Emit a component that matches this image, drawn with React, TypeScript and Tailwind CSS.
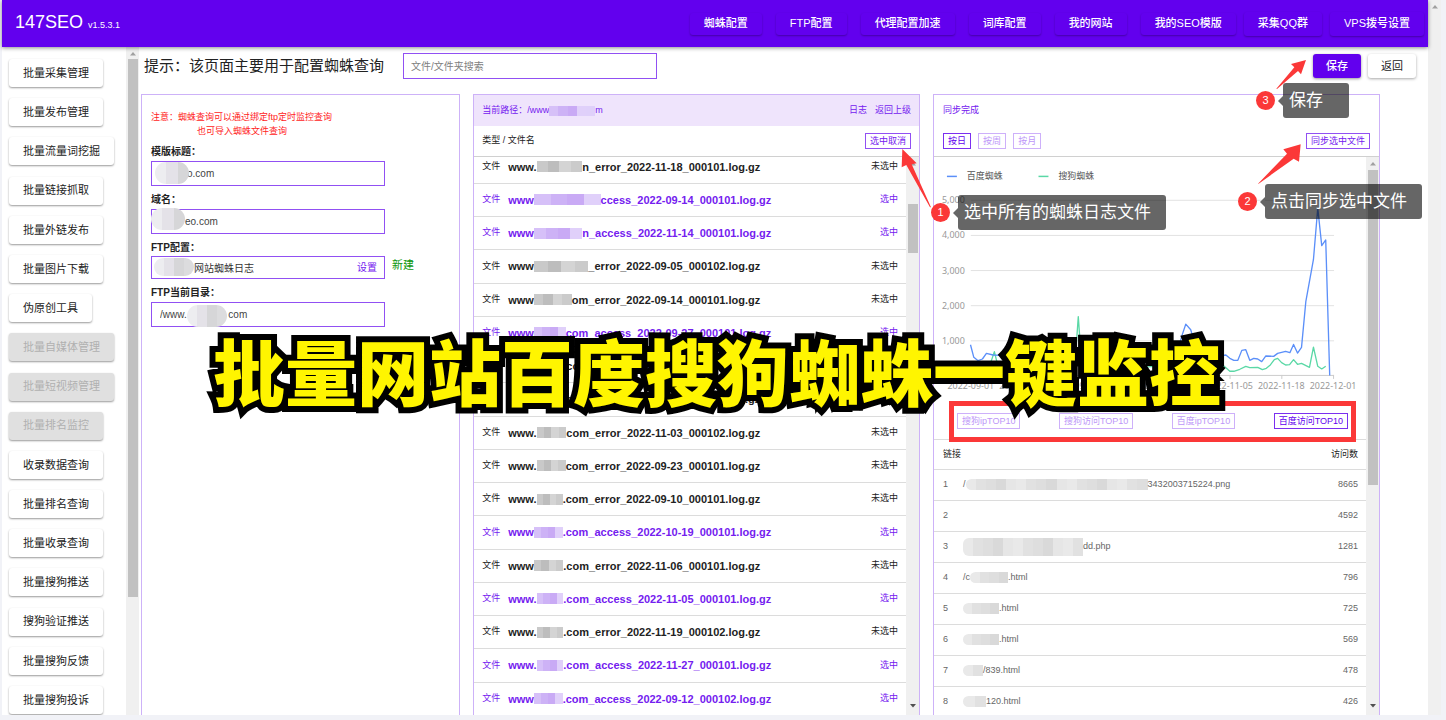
import React from "react";

type FileRow = { pre: string; post: string; picked: boolean };
type TopRow = { lead: string; tail: string; mask: string; cells: number; value: string };

const NAV = ["蜘蛛配置", "FTP配置", "代理配置加速", "词库配置", "我的网站", "我的SEO模版"];
const NAV_EXTRA = ["采集QQ群", "VPS拨号设置"];

const SIDE: { label: string; off?: boolean }[] = [
  { label: "批量采集管理" },
  { label: "批量发布管理" },
  { label: "批量流量词挖掘" },
  { label: "批量链接抓取" },
  { label: "批量外链发布" },
  { label: "批量图片下载" },
  { label: "伪原创工具" },
  { label: "批量自媒体管理", off: true },
  { label: "批量短视频管理", off: true },
  { label: "批量排名监控", off: true },
  { label: "收录数据查询" },
  { label: "批量排名查询" },
  { label: "批量收录查询" },
  { label: "批量搜狗推送" },
  { label: "搜狗验证推送" },
  { label: "批量搜狗反馈" },
  { label: "批量搜狗投诉" },
];

const FILES: FileRow[] = [
  { pre: "www.", post: "n_error_2022-11-18_000101.log.gz", picked: false },
  { pre: "www", post: "ccess_2022-09-14_000101.log.gz", picked: true },
  { pre: "www", post: "n_access_2022-11-14_000101.log.gz", picked: true },
  { pre: "www", post: "_error_2022-09-05_000102.log.gz", picked: false },
  { pre: "www", post: "om_error_2022-09-14_000101.log.gz", picked: false },
  { pre: "www", post: "com_access_2022-09-27_000101.log.gz", picked: true },
  { pre: "www.", post: "com_error_2022-11-09_000101.log.gz", picked: false },
  { pre: "www.", post: "com_error_2022-10-12_000101.log.gz", picked: false },
  { pre: "www.", post: "com_error_2022-11-03_000102.log.gz", picked: false },
  { pre: "www.", post: "com_error_2022-09-23_000101.log.gz", picked: false },
  { pre: "www.", post: ".com_error_2022-09-10_000101.log.gz", picked: false },
  { pre: "www", post: ".com_access_2022-10-19_000101.log.gz", picked: true },
  { pre: "www", post: ".com_error_2022-11-06_000101.log.gz", picked: false },
  { pre: "www.", post: ".com_access_2022-11-05_000101.log.gz", picked: true },
  { pre: "www.", post: ".com_error_2022-11-19_000102.log.gz", picked: false },
  { pre: "www.", post: ".com_access_2022-11-27_000101.log.gz", picked: true },
  { pre: "www", post: ".com_access_2022-09-12_000102.log.gz", picked: true },
];

const TOP: TopRow[] = [
  { lead: "/", tail: "3432003715224.png", mask: "h-[11px] w-[182px]", cells: 18, value: "8665" },
  { lead: "", tail: "", mask: "", cells: 0, value: "4592" },
  { lead: "", tail: "dd.php", mask: "h-[18px] w-[120px]", cells: 12, value: "1281" },
  { lead: "/c", tail: ".html", mask: "h-[11px] w-[38px]", cells: 4, value: "796" },
  { lead: "", tail: ".html", mask: "h-[11px] w-[36px]", cells: 4, value: "725" },
  { lead: "", tail: ".html", mask: "h-[11px] w-[36px]", cells: 4, value: "569" },
  { lead: "", tail: "/839.html", mask: "h-[11px] w-[20px]", cells: 2, value: "478" },
  { lead: "", tail: "120.html", mask: "h-[11px] w-[23px]", cells: 2, value: "426" },
];

const DATES = ["2022-09-01", "2022-09-14", "2022-09-27", "2022-10-10", "2022-10-23", "2022-11-05", "2022-11-18", "2022-12-01"];

const GRAY = ["bg-[#c9c9c9]", "bg-[#d4d4d4]", "bg-[#b3b3b3]", "bg-[#bdbdbd]", "bg-[#cbcbcb]"];
const VIOLET = ["bg-[#d6c0f8]", "bg-[#c9aaf5]", "bg-[#dfd0fa]", "bg-[#cdb2f6]", "bg-[#e0d0fa]"];
const PALE = ["bg-[#e9e9e9]", "bg-[#dedede]", "bg-[#e6e6e6]", "bg-[#e1e1e1]", "bg-[#d9d9d9]"];
const FIELD = ["bg-[#ededf0]", "bg-[#dcdcde]", "bg-[#d6d6d8]", "bg-[#e4e2e8]"];

function Mosaic({ tones, cells, className }: { tones: string[]; cells: number; className: string }) {
  return (
    <span aria-hidden="true" className={`flex overflow-hidden ${className}`}>
      {Array.from({ length: cells }, (_, i) => (
        <span key={i} className={`flex-1 ${tones[(i * 3) % tones.length]}`} />
      ))}
    </span>
  );
}

function ScrollRail({ thumb, foot }: { thumb: string; foot?: boolean }) {
  return (
    <div aria-hidden="true" className="flex w-[13px] shrink-0 flex-col items-center overflow-hidden bg-[#f0f0f0]">
      <svg viewBox="0 0 12 12" className="h-3 w-3 shrink-0 fill-[#a0a0a0]">
        <path d="M6 5 9 8.500H3z" />
      </svg>
      <div className="min-h-0 w-full flex-1">
        <div className={`mx-auto w-[10px] bg-[#c1c1c1] ${thumb}`} />
      </div>
      {foot && (
        <svg viewBox="0 0 12 12" className="mb-1 h-3 w-3 shrink-0 fill-[#505050]">
          <path d="M6 8.500 9 5H3z" />
        </svg>
      )}
    </div>
  );
}

function Outline({ children, dim, strong }: { children: React.ReactNode; dim?: boolean; strong?: boolean }) {
  return (
    <button
      type="button"
      className={`h-4 whitespace-nowrap border px-1 text-[9px] leading-[14px] ${
        dim ? "border-[#cdb0fa] text-[#bd97f8]" : strong ? "border-[#7b2ff0] text-[#6200ee]" : "border-[#9150f3] text-[#7420ef]"
      }`}
    >
      {children}
    </button>
  );
}

function NavButton({ label, tall }: { label: string; tall?: boolean }) {
  return (
    <button
      type="button"
      className={`whitespace-nowrap rounded-[3px] px-[14px] text-[11px] font-medium text-white shadow-[0_1px_2px_rgba(0,0,0,0.3)] ${tall ? "h-6" : "h-[22px]"}`}
    >
      {label}
    </button>
  );
}

function TrafficChart() {
  return (
    <svg viewBox="0 0 434 245" className="block w-full" role="img" aria-label="百度蜘蛛 搜狗蜘蛛">
      <g fontSize="9" fill="#555">
        <path d="M13 19.500h10" stroke="#5b8ff9" strokeWidth="1.5" />
        <text x="33" y="22">百度蜘蛛</text>
        <path d="M105 19.500h10" stroke="#5ad8a6" strokeWidth="1.5" />
        <text x="125" y="22">搜狗蜘蛛</text>
      </g>
      <g fontSize="9" fill="#999" fontFamily="'Noto Sans', sans-serif">
        {["5,000", "4,000", "3,000", "2,000", "1,000"].map((t, i) => (
          <g key={t}>
            <path d={`M37 ${43.5 + i * 35.3}H402`} stroke="#e2e2e2" />
            <text x="31" y={46.5 + i * 35.3} textAnchor="end">
              {t}
            </text>
          </g>
        ))}
        <path d="M37 219.500H402" stroke="#ccc" />
        {DATES.map((d, i) => (
          <g key={d}>
            <path d={`M${37.5 + i * 52} 219v4`} stroke="#ccc" />
            <text x={37 + i * 52} y="233" textAnchor="middle">
              {d}
            </text>
          </g>
        ))}
      </g>
      <g transform="translate(-4 23) scale(0.3333)" fill="none" strokeWidth="4" strokeLinejoin="round">
        <polyline
          stroke="#5ad8a6"
          points="122,568 140,562 158,566 176,558 185,545 194,518 202,550 230,562 280,566 330,560 380,565 430,558 438,540 447,412 456,540 470,560 520,563 580,558 640,565 700,560 760,563 820,556 870,548 885,560 904,577 916,577 934,571 952,562 964,566 988,565 1002,572 1014,568 1026,558 1038,542 1048,538 1060,551 1072,558 1084,557 1096,542 1108,556 1120,553 1144,565 1156,504 1169,562 1181,570 1193,562"
        />
        <polyline
          stroke="#5b8ff9"
          points="122,497 132,535 145,545 158,540 170,523 190,528 212,529 240,535 300,530 360,538 420,528 480,536 540,530 600,538 660,528 720,533 745,520 760,468 771,435 786,452 800,500 830,535 870,532 892,528 904,538 916,544 928,544 940,514 952,512 964,544 976,538 988,540 1000,548 1012,531 1036,532 1048,523 1072,517 1085,521 1096,496 1108,522 1120,505 1133,367 1156,240 1169,85 1181,198 1193,181 1205,590"
        />
      </g>
    </svg>
  );
}

function Callout({ n, text, place, box }: { n: string; text: string; place: string; box: string }) {
  return (
    <div className={`absolute z-30 flex items-center ${place}`}>
      <span className="flex h-[19px] w-[19px] items-center justify-center rounded-full bg-[#fb3838] text-[11px] text-white">{n}</span>
      <span className="ml-[3px] h-0 w-0 border-y-[5px] border-r-[5px] border-y-transparent border-r-[#666]" />
      <span className={`h-[35px] whitespace-nowrap rounded-[3px] bg-black/60 px-[6px] text-[17px] leading-[35px] text-white ${box}`}>{text}</span>
    </div>
  );
}

const fieldClass = "h-[25px] w-full border border-[#9150f3] bg-white text-[10px] text-[#444] outline-none";
const labelClass = "mt-[6px] block text-[10px] font-bold leading-4 text-[#222]";

export default function App() {
  return (
    <div className="relative flex h-screen overflow-hidden bg-[#f1f2f7] pb-[5px] pl-[2px] pr-[5px] font-['Liberation_Sans','Noto_Sans_CJK_SC',sans-serif] text-[#222]">
      <div className="flex min-w-0 flex-1 flex-col bg-white">
        <header className="relative z-10 flex h-[47px] shrink-0 items-center justify-between bg-[#6200ee] pl-[13px] pr-1 text-white shadow-[0_1px_4px_rgba(0,0,0,0.45)]">
          <h1 className="flex items-baseline gap-[5px] text-[18px] leading-6">
            147SEO <small className="text-[9px]">v1.5.3.1</small>
          </h1>
          <nav className="flex items-center gap-2">
            <div className="flex gap-[14px]">
              {NAV.map((n) => (
                <NavButton key={n} label={n} />
              ))}
            </div>
            {NAV_EXTRA.map((n) => (
              <NavButton key={n} label={n} tall />
            ))}
          </nav>
        </header>

        <div className="flex min-h-0 flex-1">
          <aside className="flex w-[137px] shrink-0">
            <div className="flex min-h-0 flex-1 flex-col items-start justify-between overflow-hidden pb-px pl-[7px] pt-3">
              {SIDE.map((s) => (
                <button
                  key={s.label}
                  type="button"
                  disabled={s.off}
                  className={`h-7 shrink-0 whitespace-nowrap rounded-[3px] px-[14px] text-[11px] shadow-[0_1px_2px_rgba(0,0,0,0.4)] ${
                    s.off ? "bg-[#e0e0e0] text-[#b0b0b0]" : "bg-white text-[#222]"
                  }`}
                >
                  {s.label}
                </button>
              ))}
            </div>
            <ScrollRail thumb="h-[82%]" />
          </aside>

          <main className="flex min-w-0 flex-1 flex-col">
            <div className="flex h-[38px] shrink-0 items-center pl-[5px] pr-3">
              <p className="whitespace-nowrap text-[15px]">提示：该页面主要用于配置蜘蛛查询</p>
              <input
                aria-label="文件搜索"
                placeholder="文件/文件夹搜索"
                className="ml-[19px] h-[26px] w-[254px] border border-[#9150f3] px-[7px] text-[10px] outline-none placeholder:text-[#808080]"
              />
              <div className="ml-auto flex gap-[7px] text-[11px]">
                <button type="button" className="h-6 rounded-[3px] bg-[#6200ee] px-[13px] font-medium text-white shadow-[0_1px_3px_rgba(0,0,0,0.4)]">
                  保存
                </button>
                <button type="button" className="h-6 rounded-[3px] bg-white px-[13px] shadow-[0_1px_3px_rgba(0,0,0,0.35)]">
                  返回
                </button>
              </div>
            </div>

            <div className="mt-[9px] grid min-h-0 flex-1 grid-cols-[5fr_7fr_7fr] gap-x-[13px] pl-[2px] pr-12">
              <section className="border-x border-t border-[#cdb2f8] pl-[9px] pt-[15px]">
                <p className="text-[9px] leading-[14px] text-[#ff1c1c]">
                  注意：蜘蛛查询可以通过绑定ftp定时监控查询
                  <br />
                  <span className="pl-[46px]">也可导入蜘蛛文件查询</span>
                </p>
                <div className="w-[234px]">
                  <label htmlFor="tpl" className={labelClass}>
                    模版标题：
                  </label>
                  <div className="relative">
                    <input id="tpl" defaultValue="o.com" className={`${fieldClass} pl-[35px]`} />
                    <Mosaic tones={FIELD} cells={3} className="absolute left-1 top-[2px] h-[22px] w-[34px] rounded-full" />
                  </div>
                  <label htmlFor="domain" className={labelClass}>
                    域名：
                  </label>
                  <div className="relative">
                    <input id="domain" defaultValue="eo.com" className={`${fieldClass} pl-[33px]`} />
                    <Mosaic tones={FIELD} cells={3} className="absolute left-0 top-0 h-[22px] w-[34px] rounded-full" />
                  </div>
                  <label htmlFor="ftp" className={labelClass}>
                    FTP配置：
                  </label>
                  <div className="relative flex items-center">
                    <input id="ftp" defaultValue="网站蜘蛛日志" className="h-[23px] w-full shrink-0 border border-[#9150f3] pl-[42px] text-[10px] text-[#333] outline-none" />
                    <button type="button" className="absolute right-2 text-[10px] text-[#7420ef]">
                      设置
                    </button>
                    <Mosaic tones={FIELD} cells={4} className="absolute left-[3px] top-[2px] h-[18px] w-10 rounded-full" />
                    <a href="#new" className="ml-[7px] shrink-0 pb-1 text-[11px] text-[#0c960c]">
                      新建
                    </a>
                  </div>
                  <label htmlFor="dir" className={labelClass}>
                    FTP当前目录：
                  </label>
                  <div className="relative">
                    <input id="dir" defaultValue={"/www.               com"} className={`${fieldClass} pl-[8px]`} />
                    <Mosaic tones={FIELD} cells={4} className="absolute left-9 top-1 h-[22px] w-10 rounded-full" />
                  </div>
                </div>
              </section>

              <section className="flex min-h-0 min-w-0 flex-col border-x border-t border-[#cdb2f8]">
                <div className="flex h-[31px] shrink-0 items-center justify-between bg-[#efe4fc] pl-2 pr-2 text-[9px] text-[#7420ef]">
                  <span className="flex items-center">
                    当前路径：/www
                    <Mosaic tones={VIOLET} cells={5} className="h-[10px] w-[46px]" />m
                  </span>
                  <span className="flex gap-2">
                    <a href="#log">日志</a>
                    <a href="#up">返回上级</a>
                  </span>
                </div>
                <div className="flex h-[31px] shrink-0 items-center justify-between border-b border-[#d0d0d0] pl-2 pr-2 text-[9px]">
                  <span>类型 / 文件名</span>
                  <Outline>选中取消</Outline>
                </div>
                <div className="flex min-h-0 flex-1">
                  <div className="min-w-0 flex-1 overflow-hidden">
                    <table className="-mt-[6px] h-[calc(100%+7px)] w-full border-collapse text-[9px]">
                      <tbody>
                        {FILES.map((f) => (
                          <tr key={f.post} className={`border-b border-[#dcdcdc] ${f.picked ? "text-[#7420ef]" : "text-[#222]"}`}>
                            <td className="w-[34px] pl-2">文件</td>
                            <td className="text-[11px] font-bold">
                              <span className={`flex items-center leading-4 ${f.picked ? "w-[263px]" : "w-[252px]"}`}>
                                {f.pre}
                                <Mosaic tones={f.picked ? VIOLET : GRAY} cells={4} className="h-[11px] flex-1" />
                                {f.post}
                              </span>
                            </td>
                            <td className="pr-2 text-right">{f.picked ? "选中" : "未选中"}</td>
                          </tr>
                        ))}
                      </tbody>
                    </table>
                  </div>
                  <ScrollRail thumb="mt-[35px] h-[49px]" foot />
                </div>
              </section>

              <section className="flex min-h-0 min-w-0 flex-col border-x border-t border-[#cdb2f8]">
                <div className="flex h-[31px] shrink-0 items-center pl-[9px] text-[9px] text-[#7420ef]">同步完成</div>
                <div className="flex h-[31px] shrink-0 items-center justify-between border-b border-[#d0d0d0] pl-[9px] pr-[9px]">
                  <div className="flex gap-[7px]">
                    <Outline strong>按日</Outline>
                    <Outline dim>按周</Outline>
                    <Outline dim>按月</Outline>
                  </div>
                  <Outline>同步选中文件</Outline>
                </div>
                <div className="flex min-h-0 flex-1">
                  <div className="min-w-0 flex-1 overflow-hidden">
                    <TrafficChart />
                    <div className="relative z-10 -mb-[3px] ml-[15px] mr-[10px] flex h-[41px] items-center justify-between border-[5px] border-[#fb3838] px-[3px]">
                      <Outline dim>搜狗ipTOP10</Outline>
                      <Outline dim>搜狗访问TOP10</Outline>
                      <Outline dim>百度ipTOP10</Outline>
                      <Outline strong>百度访问TOP10</Outline>
                    </div>
                    <table className="w-full border-collapse border-t border-[#dcdcdc] text-[9px]">
                      <thead>
                        <tr className="h-[30px] border-b border-[#dcdcdc]">
                          <th colSpan={2} className="pl-[9px] text-left font-normal">
                            链接
                          </th>
                          <th className="pr-2 text-right font-normal">访问数</th>
                        </tr>
                      </thead>
                      <tbody className="text-[#666]">
                        {TOP.map((t, i) => (
                          <tr key={t.value} className="h-[31px] border-b border-[#dcdcdc]">
                            <td className="w-[29px] pl-[9px]">{i + 1}</td>
                            <td>
                              <span className="flex items-center">
                                {t.lead}
                                {t.cells > 0 && <Mosaic tones={PALE} cells={t.cells} className={`rounded-l-md ${t.mask}`} />}
                                {t.tail}
                              </span>
                            </td>
                            <td className="pr-2 text-right">{t.value}</td>
                          </tr>
                        ))}
                      </tbody>
                    </table>
                  </div>
                  <ScrollRail thumb="mt-[1px] h-[315px]" foot />
                </div>
              </section>
            </div>
          </main>
        </div>
      </div>
      <ScrollRail thumb="" />

      <svg viewBox="0 0 96 180" aria-hidden="true" className="absolute left-[900px] top-[148px] z-20 h-[60px] w-8 fill-[#fb3838]">
        <path d="M7 3 50 46 35 49 93 178 90 178 19 51 5 58z" />
      </svg>
      <svg viewBox="0 0 135 126" aria-hidden="true" className="absolute left-[1257px] top-[143px] z-20 h-[42px] w-[45px] fill-[#fb3838]">
        <path d="M3 122 90 32 79 19 131 4 126 56 110 47 5 122z" />
      </svg>
      <svg viewBox="0 0 96 93" aria-hidden="true" className="absolute left-[1275px] top-[59px] z-20 h-[31px] w-8 fill-[#fb3838]">
        <path d="M4 89 58 25 48 15 93 3 78 46 69 36 6 90z" />
      </svg>
      <Callout n="1" text="选中所有的蜘蛛日志文件" place="left-[931px] top-[195px]" box="w-[208px]" />
      <Callout n="2" text="点击同步选中文件" place="left-[1238px] top-[184px]" box="w-[157px]" />
      <Callout n="3" text="保存" place="left-[1256px] top-[83px]" box="w-[66px]" />

      <div className="pointer-events-none absolute inset-x-0 top-[333px] z-40 flex justify-center pr-3">
        <strong className="whitespace-nowrap font-['Noto_Sans_CJK_SC',sans-serif] text-[72px] font-black leading-[72px] text-[#fff500] [-webkit-text-stroke:12px_black] [paint-order:stroke_fill]">
          批量网站百度搜狗蜘蛛一键监控
        </strong>
      </div>
    </div>
  );
}
